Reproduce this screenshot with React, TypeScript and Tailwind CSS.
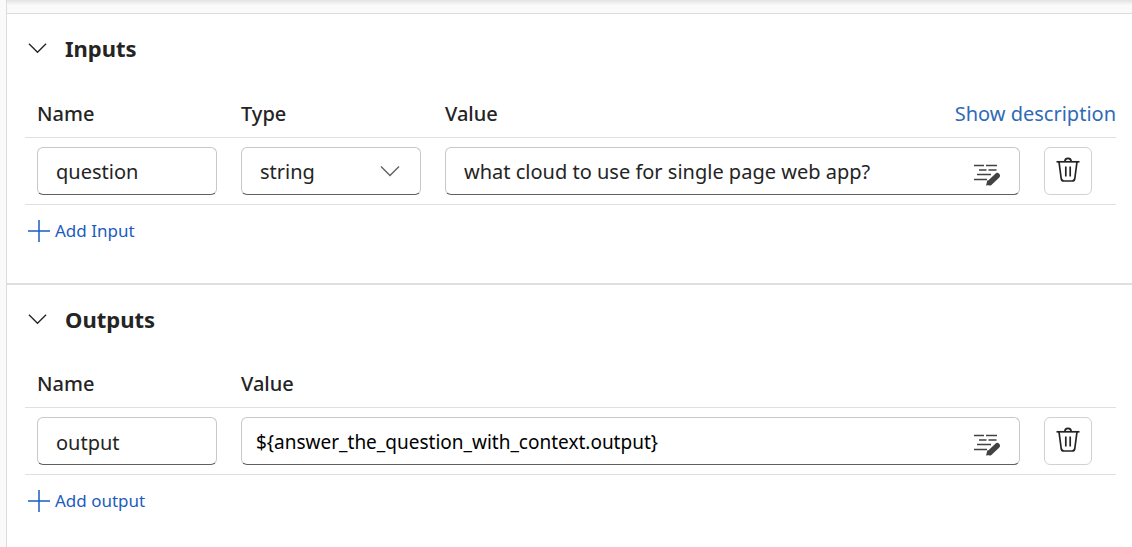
import { useState, type ReactNode } from "react";

function Chevron({ className }: { className: string }) {
  return (
    <svg viewBox="0 0 20 12" className={className} fill="none" stroke="currentColor" strokeWidth="1.4" aria-hidden="true">
      <path d="M1 1.5 10 10.5 19 1.5" />
    </svg>
  );
}

function Plus() {
  return (
    <svg viewBox="0 0 22 22" className="size-[22px]" fill="none" stroke="currentColor" strokeWidth="1.5" aria-hidden="true">
      <path d="M11 0v22M0 11h22" />
    </svg>
  );
}

function EditLines() {
  return (
    <svg viewBox="0 0 27 24" className="h-6 w-[27px]" fill="none" stroke="currentColor" aria-hidden="true">
      <path strokeWidth="1.5" d="M0 3.5h10M12 3.5h11M5 8h7.500M14.500 8h8M3 12.500h14M0 17.500h13" />
      <path strokeWidth="5.4" strokeLinecap="round" d="M23.200 13.700 15.800 20.700" />
      <path fill="currentColor" stroke="none" d="m13.500 18-1.500 5.500 5.500-.7z" />
    </svg>
  );
}

function Trash() {
  return (
    <svg viewBox="0 0 24 26" className="h-[26px] w-6" fill="none" stroke="currentColor" strokeWidth="1.7" aria-hidden="true">
      <path d="M0.500 4.800h23" />
      <path d="M8.800 4.800C8.800 0.300 15.200 0.300 15.200 4.800" />
      <path d="M3 4.800 5.200 21.500Q5.600 24 8 24H16Q18.400 24 18.800 21.500L21 4.800" />
      <path d="M9.800 9.500v10M14.200 9.500v10" />
    </svg>
  );
}

const field =
  "h-12 w-full rounded-md border border-[#c8c8c8] border-b-[#606060] bg-white pt-0.5 text-[#242424] outline-none focus:border-b-[#1a5fc8]";
const headCell = "px-3 text-left text-xl font-medium";
const cell = "px-3 py-[9px]";

function ValueField({ label, initial, className }: { label: string; initial: string; className: string }) {
  return (
    <div className={`${field} flex items-center pr-[18px] ${className}`}>
      <input aria-label={label} defaultValue={initial} className="min-w-0 flex-1 bg-transparent outline-none" />
      <button type="button" aria-label={`Edit ${label}`} className="mt-1 text-[#424242]">
        <EditLines />
      </button>
    </div>
  );
}

function DeleteButton({ label }: { label: string }) {
  return (
    <button
      type="button"
      aria-label={label}
      className="flex size-12 items-center justify-center rounded-md border border-[#d1d1d1] bg-white pb-0.5 text-[#242424]"
    >
      <Trash />
    </button>
  );
}

function Section({ title, addLabel, children }: { title: string; addLabel: string; children: ReactNode }) {
  const [open, setOpen] = useState(true);
  return (
    <section className="pt-[18px] pr-4 pb-9 pl-[18px]">
      <h2 className="text-[22px] leading-8 font-bold">
        <button type="button" aria-expanded={open} onClick={() => setOpen(!open)} className="flex items-center gap-[18px] pl-[3px]">
          <Chevron className="h-3 w-[19px]" />
          {title}
        </button>
      </h2>
      {open && (
        <>
          {children}
          <button type="button" className="mt-[10px] ml-[3px] flex h-8 items-center gap-[5px] text-[17px] text-[#1b5cbe]">
            <Plus />
            {addLabel}
          </button>
        </>
      )}
    </section>
  );
}

export default function App() {
  return (
    <div className="min-h-screen bg-[#fafafa] pl-1.5 font-['Noto_Sans','Open_Sans',sans-serif] text-[#242424]">
      <div className="h-[13px] border-l border-[#dcdcdc] bg-linear-to-b from-[#e2e2e2] to-[#fafafa] to-40%" />
      <main className="min-h-[calc(100vh-13px)] divide-y-2 divide-[#dfdfdf] border-t border-l border-[#dcdcdc] bg-white">
        <Section title="Inputs" addLabel="Add Input">
          <table className="mt-[27px] w-full table-fixed border-collapse">
            <colgroup>
              <col className="w-[204px]" />
              <col className="w-[204px]" />
              <col />
              <col className="w-[84px]" />
            </colgroup>
            <thead>
              <tr className="h-[46px] border-b border-[#e0e0e0]">
                <th scope="col" className={headCell}>Name</th>
                <th scope="col" className={headCell}>Type</th>
                <th scope="col" colSpan={2} className="pl-3 text-left text-xl font-medium">
                  <div className="flex items-center justify-between">
                    Value
                    <a href="#description" className="font-normal text-[#2f6ab5]">Show description</a>
                  </div>
                </th>
              </tr>
            </thead>
            <tbody>
              <tr className="border-b border-[#e0e0e0]">
                <td className={cell}>
                  <input aria-label="Input name" defaultValue="question" className={`${field} px-[18px] text-xl`} />
                </td>
                <td className={cell}>
                  <div className="relative">
                    <select aria-label="Input type" defaultValue="string" className={`${field} appearance-none pr-12 pl-[18px] text-xl`}>
                      <option>string</option>
                      <option>int</option>
                      <option>bool</option>
                      <option>list</option>
                    </select>
                    <Chevron className="pointer-events-none absolute top-[18px] right-[21px] h-3 w-5 text-[#616161]" />
                  </div>
                </td>
                <td className={cell}>
                  <ValueField label="Input value" initial="what cloud to use for single page web app?" className="pl-[18px] text-xl" />
                </td>
                <td className={cell}>
                  <DeleteButton label="Delete input" />
                </td>
              </tr>
            </tbody>
          </table>
        </Section>
        <Section title="Outputs" addLabel="Add output">
          <table className="mt-[27px] w-full table-fixed border-collapse">
            <colgroup>
              <col className="w-[204px]" />
              <col />
              <col className="w-[84px]" />
            </colgroup>
            <thead>
              <tr className="h-[46px] border-b border-[#e0e0e0]">
                <th scope="col" className={headCell}>Name</th>
                <th scope="col" colSpan={2} className={headCell}>Value</th>
              </tr>
            </thead>
            <tbody>
              <tr className="border-b border-[#e0e0e0]">
                <td className={cell}>
                  <input aria-label="Output name" defaultValue="output" className={`${field} px-[18px] text-xl`} />
                </td>
                <td className={cell}>
                  <ValueField label="Output value" initial="${answer_the_question_with_context.output}" className="pl-3.5 text-[19px] text-black" />
                </td>
                <td className={cell}>
                  <DeleteButton label="Delete output" />
                </td>
              </tr>
            </tbody>
          </table>
        </Section>
      </main>
    </div>
  );
}
